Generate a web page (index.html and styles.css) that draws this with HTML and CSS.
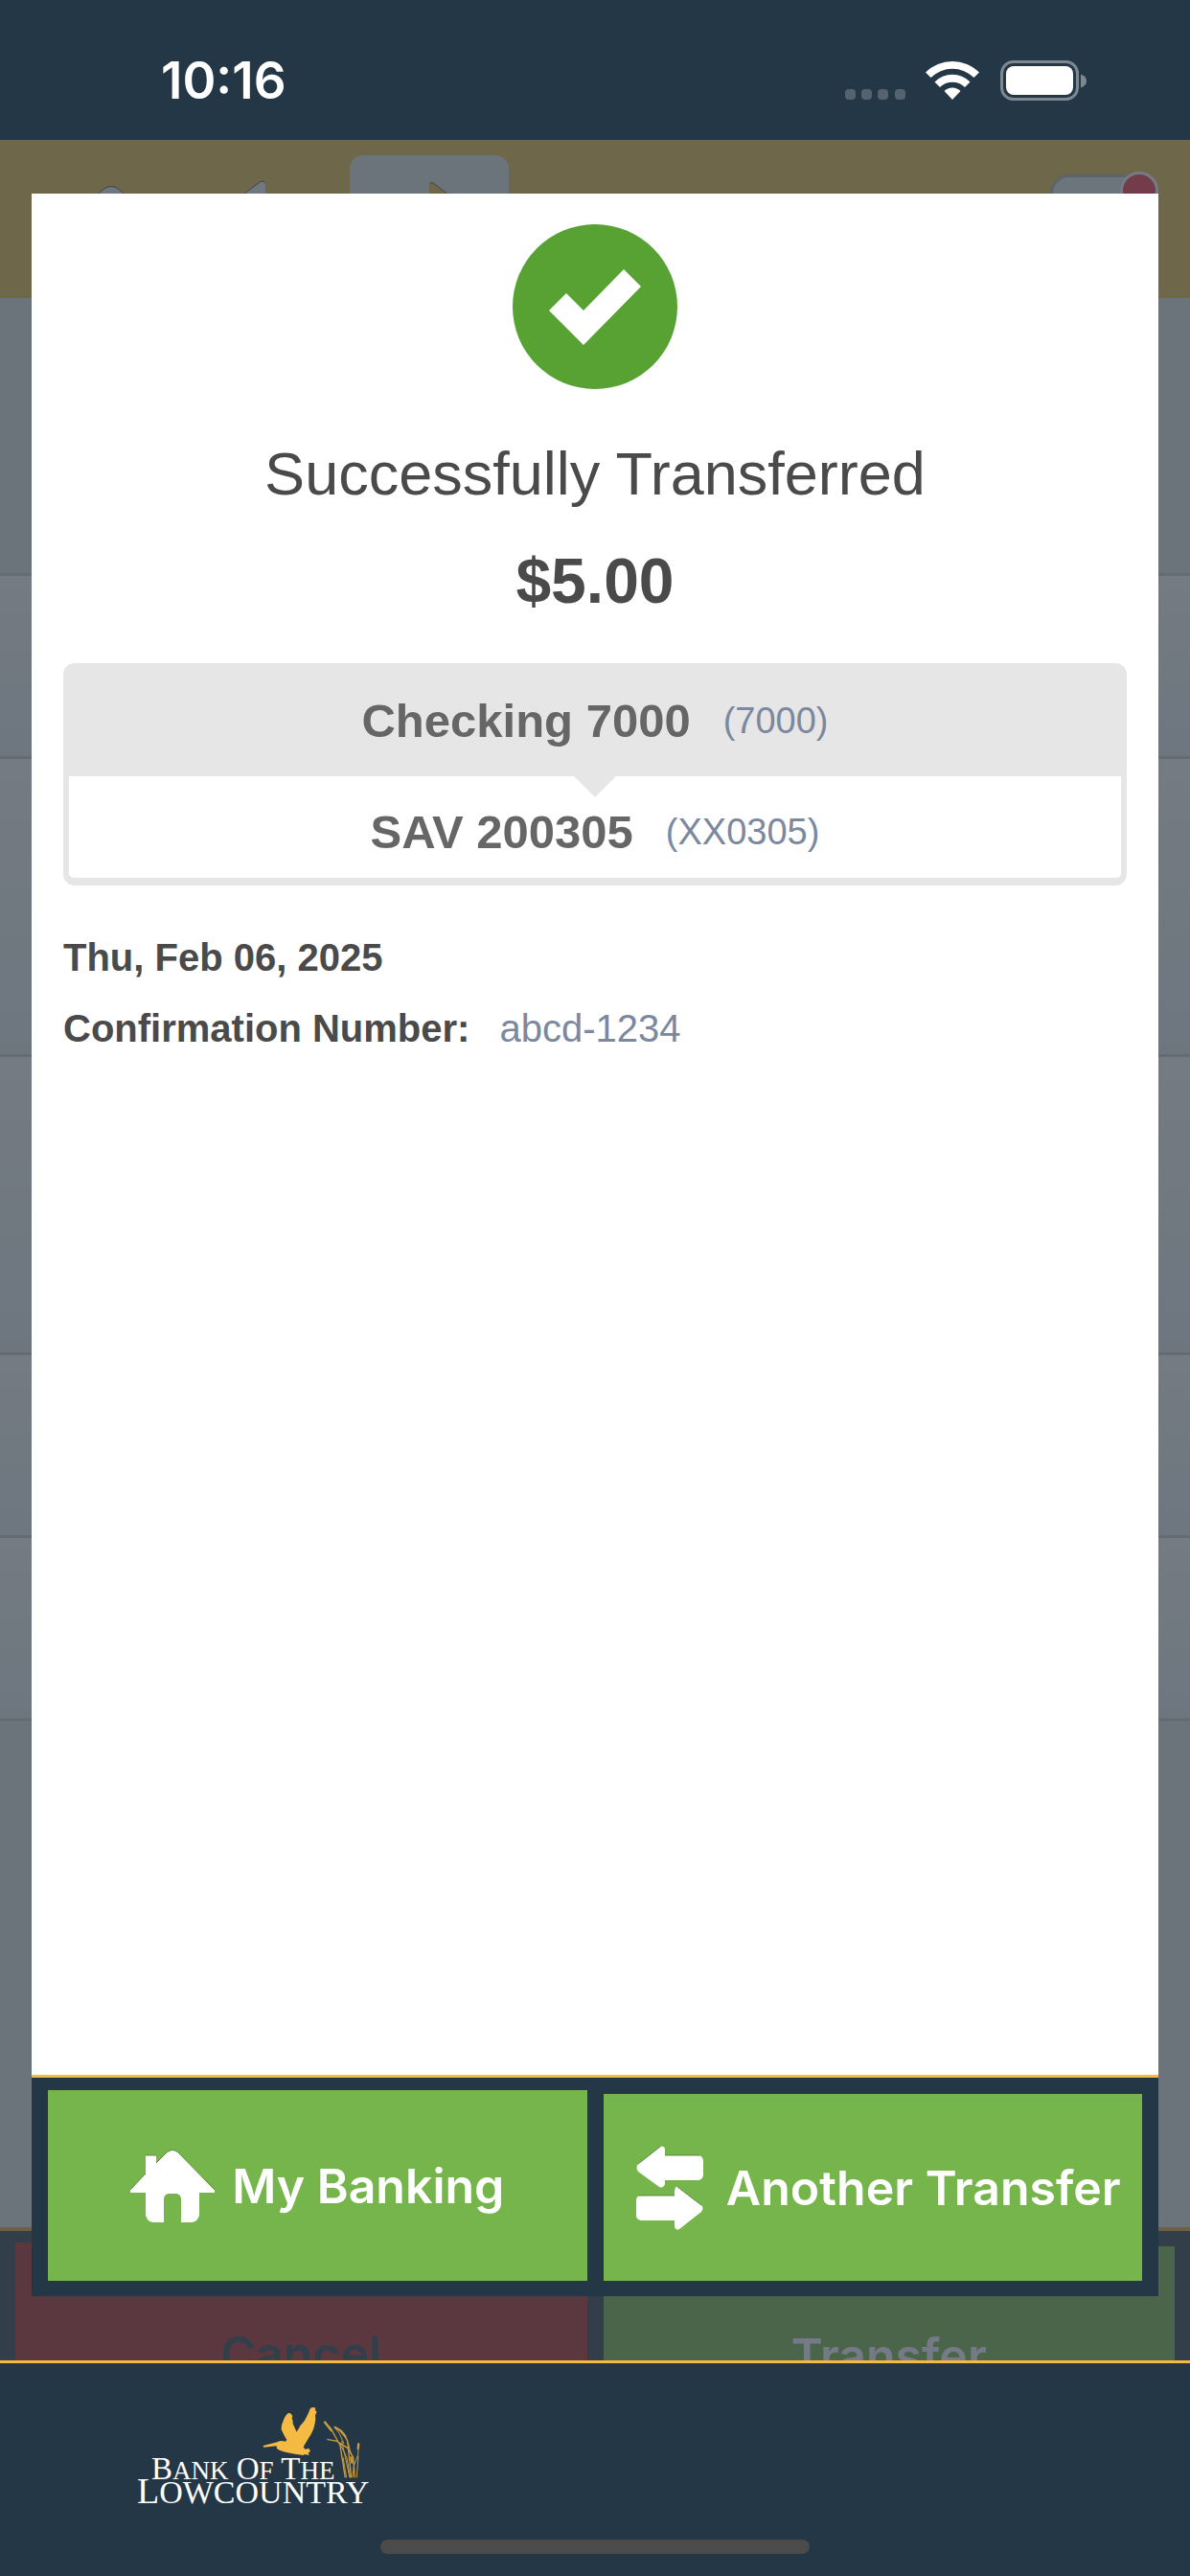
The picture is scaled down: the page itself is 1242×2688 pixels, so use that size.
FILE: index.html
```
<!DOCTYPE html>
<html lang="en">
<head>
    <meta charset="UTF-8">
    <meta name="viewport" content="width=device-width, initial-scale=1.0">
    <title>Transfer Complete</title>
    <link rel="stylesheet" href="styles.css">
</head>
<body>
    <div class="status-bar">
        <time class="clock">10:16</time>
        <svg class="status-icons" viewBox="0 0 252 42" aria-hidden="true">
            <g fill="#56636f">
                <rect x="0" y="30" width="11" height="11" rx="4"/>
                <rect x="17" y="30" width="11" height="11" rx="4"/>
                <rect x="34" y="30" width="11" height="11" rx="4"/>
                <rect x="52" y="30" width="11" height="11" rx="4"/>
            </g>
            <g fill="#fff">
                <path d="M84 12.500a40 40 0 0 1 56 0l-5.500 5.500a32 32 0 0 0-45 0z"/>
                <path d="M93.500 22.500a26 26 0 0 1 37 0l-5.500 5.500a18.500 18.500 0 0 0-26 0z"/>
                <path d="M103.500 32a12 12 0 0 1 17 0L112 41z"/>
            </g>
            <rect x="163.500" y="1.500" width="79" height="39" rx="12" fill="none" stroke="#7d8891" stroke-width="3"/>
            <rect x="168" y="6" width="70" height="30" rx="8" fill="#fff"/>
            <path d="M246 14.500q6 2 6 7t-6 7z" fill="#7d8891"/>
        </svg>
    </div>

    <!-- Transfer page, dimmed behind the dialog -->
    <div class="page" aria-hidden="true">
        <nav class="tabs">
            <a href="#" class="tab" tabindex="-1">
                <svg class="icon-home" viewBox="0 0 88 76"><path d="M30 15Q44-3 58 15L88 44H72V76H53V46H36V76H16V44H0z"/></svg>
            </a>
            <a href="#" class="tab" tabindex="-1">
                <svg class="icon-arrows" viewBox="0 0 70 88"><path d="M25 1Q30 0 30 4V14H75Q80 15 80 20V34H30V44H25L2 26Q-1 22 2 18z"/></svg>
            </a>
            <a href="#" class="tab active" tabindex="-1">
                <svg class="icon-arrows" viewBox="0 0 70 88"><path d="M35 4Q37 0 41 4L68 24Q70 27 68 30L41 50Q35 52 35 46V38H0V20H35z"/></svg>
            </a>
            <div class="toggle"><span class="badge"></span></div>
        </nav>
        <div class="intro"></div>
        <div class="row"></div>
        <div class="row tall"></div>
        <div class="row tall"></div>
        <div class="row"></div>
        <div class="row"></div>
        <div class="page-actions">
            <button type="button" class="page-btn cancel" tabindex="-1">Cancel</button>
            <button type="button" class="page-btn submit" tabindex="-1">Transfer</button>
        </div>
    </div>

    <main class="modal">
        <div class="modal-body">
            <svg class="check" viewBox="0 0 172 172" aria-hidden="true">
                <circle cx="86" cy="86" r="86" fill="#58a233"/>
                <path d="M56 72L74 90L116 47L134 65L74 126L38 90z" fill="#fff"/>
            </svg>
            <h1>Successfully Transferred</h1>
            <p class="amount">$5.00</p>

            <div class="accounts">
                <div class="account from">
                    <span class="account-name">Checking 7000</span>
                    <span class="account-number">(7000)</span>
                </div>
                <div class="account to">
                    <span class="account-name">SAV 200305</span>
                    <span class="account-number">(XX0305)</span>
                </div>
            </div>

            <p class="detail">Thu, Feb 06, 2025</p>
            <p class="detail">Confirmation Number: <span class="detail-value">abcd-1234</span></p>
        </div>

        <div class="modal-actions">
            <button type="button" class="btn">
                <svg class="icon-home" viewBox="0 0 88 76" aria-hidden="true">
                    <path d="M0 42L16 25V6H27V14L38 3Q44-2 50 3L88 42V45H72V68Q71 75 64 76H53V51Q52 46 47 46H41Q36 46 35 51V76H24Q17 75 16 68V45H0z" fill="#fff"/>
                    <path d="M0 42L16 25M16 6H27M27 14L38 3Q44-2 50 3L88 42" fill="none" stroke="#5c8b41" stroke-width="1"/>
                </svg>
                My Banking
            </button>
            <button type="button" class="btn btn-short">
                <svg class="icon-arrows" viewBox="0 0 70 88" aria-hidden="true">
                    <path d="M25 1Q30 0 30 4V10H65Q70 11 70 16V30Q70 35 65 36H30V40Q28 45 24 43L2 27Q-1 23 2 19z"/>
                    <path d="M41 44Q42 41 46 45L68 62Q71 65 68 69L45 87Q41 89 40 84V78H5Q0 77 0 73V56Q1 52 5 52H40V47z"/>
                    <path d="M2 19L25 1M30 10H66M3 52H40M43 43L68 62" fill="none" stroke="#5c8b41" stroke-width="1"/>
                </svg>
                Another Transfer
            </button>
        </div>
    </main>

    <footer class="footer">
        <svg class="logo" viewBox="0 0 250 108" role="img" aria-label="Bank Of The Lowcountry">
            <g transform="translate(-40 -70) scale(.3333)">
                <path fill="#f4ba42" d="M524 336L568 325Q578 319 594 323L598 318Q588 302 581 286Q580 272 587 258Q594 238 604 233Q613 234 616 243L614 250Q618 257 617 267L629 293Q639 272 653 259L663 240L672 219Q680 214 688 218L687 225L692 230L687 241L688 252Q686 279 674 300L661 321L650 340L655 347L667 345L671 350L670 356L665 358L668 366L654 363L650 366L623 362L593 356L575 350L567 345L566 337L526 341z"/>
                <g fill="none" stroke="#c79c41" stroke-width="4">
                    <path d="M715 260L737 284L765 335L781 436M746 276L771 291L788 320L800 436M724 316L755 322L788 343L806 372L811 436"/>
                    <path d="M776 296L791 330L800 366M823 327L821 365L808 400L804 436M795 436L781 370L770 322M817 436L822 368M765 330L786 374L797 436M785 436L774 372M749 281L763 298L777 330" stroke-width="3"/>
                    <path d="M716 261L739 290M748 278L766 289L783 309M823 329L821 347M799 370L803 392" stroke-width="7"/>
                </g>
            </g>
            <g class="logo-text">
                <text x="18" y="77" font-size="33">B<tspan font-size="27">ANK</tspan> O<tspan font-size="27">F</tspan> T<tspan font-size="27">HE</tspan></text>
                <text x="3" y="102" font-size="38">L<tspan font-size="34">OWCOUNTRY</tspan></text>
            </g>
        </svg>
        <span class="home-indicator"></span>
    </footer>
</body>
</html>
```
FILE: styles.css
```
* {
    box-sizing: border-box;
}

body {
    margin: 0;
    min-height: 100vh;
    display: flex;
    flex-direction: column;
    background-color: #6b737b;
    font-family: "Liberation Sans", Arial, sans-serif;
    color: #4a4a4a;
}

h1,
p {
    margin: 0;
}

button {
    border: none;
    border-radius: 0;
    padding: 0;
    font-family: Inter, sans-serif;
    font-size: 50px;
    font-weight: 600;
    cursor: pointer;
}

/* Status bar */
.status-bar {
    height: 146px;
    padding: 22px 108px 0 168px;
    display: flex;
    align-items: center;
    justify-content: space-between;
    background-color: #243746;
}

.clock {
    font-family: Inter, sans-serif;
    font-size: 53px;
    font-weight: 600;
    line-height: 60px;
    color: white;
}

.status-icons {
    width: 252px;
    height: 42px;
}

/* Dimmed page */
.page {
    flex: 1;
    display: flex;
    flex-direction: column;
    padding-bottom: 100px;
}

.tabs {
    height: 165px;
    padding: 16px 33px 0;
    display: flex;
    background-color: #6e674a;
}

.tab {
    width: 166px;
    padding-top: 27px;
    display: flex;
    justify-content: center;
    border-radius: 14px 14px 0 0;
    fill: #6f7780;
}

.tab svg {
    overflow: visible;
    filter: drop-shadow(0 -1px 0 #41464b);
}

.tab.active {
    background-color: #6b737b;
    fill: #6e674a;
}

.toggle {
    position: relative;
    width: 113px;
    height: 60px;
    margin: 20px 0 0 auto;
    border: 3px solid #5d656c;
    border-radius: 20px;
    background-color: #6c747c;
}

.badge {
    position: absolute;
    top: -6px;
    right: -3px;
    width: 40px;
    height: 40px;
    border: 3px solid #747b83;
    border-radius: 50%;
    background-color: #743c4b;
}

.intro {
    height: 290px;
    border-bottom: 3px solid #636b73;
}

.row {
    height: 191px;
    border-bottom: 3px solid #636b73;
    background: linear-gradient(#747b82, #6d767f);
}

.row.tall {
    height: 311px;
}

.page-actions {
    margin-top: auto;
    height: 264px;
    padding: 12px 16px 16px;
    display: grid;
    grid-template-columns: 1fr 1fr;
    gap: 17px;
    border-top: 4px solid #6e6046;
    background-color: #323f4b;
}

.page-btn.cancel {
    background-color: #5b383f;
    color: #323f4b;
}

.page-btn.submit {
    margin-top: 4px;
    background-color: #4b654b;
    color: #747b86;
}

/* Dialog */
.modal {
    position: fixed;
    top: 202px;
    right: 33px;
    bottom: 292px;
    left: 33px;
    display: flex;
    flex-direction: column;
    background-color: white;
}

.modal-body {
    flex: 1;
    padding: 32px 33px;
}

.check {
    display: block;
    width: 172px;
    height: 172px;
    margin: 0 auto 48px;
}

h1 {
    font-size: 63px;
    font-weight: normal;
    line-height: 80px;
    text-align: center;
}

.amount {
    margin-top: 32px;
    font-size: 66px;
    font-weight: bold;
    line-height: 80px;
    text-align: center;
}

.accounts {
    margin: 46px 0 38px;
    border: 6px solid #e6e6e6;
    border-bottom-width: 8px;
    border-radius: 12px;
    background-color: white;
}

.account {
    display: flex;
    align-items: center;
    justify-content: center;
    gap: 34px;
    line-height: 56px;
}

.account.from {
    position: relative;
    padding: 26px 0 30px;
    background-color: #e6e6e6;
}

/* Arrow pointing at the destination account */
.account.from::after {
    content: "";
    position: absolute;
    top: 100%;
    left: 50%;
    margin-left: -22px;
    border: 22px solid transparent;
    border-top-color: #e6e6e6;
    border-bottom: none;
}

.account.to {
    padding: 30px 0 20px;
}

.account-name {
    font-size: 49px;
    font-weight: bold;
    color: #666;
}

.account-number {
    font-size: 38px;
    color: #7b889e;
}

.detail {
    font-size: 40px;
    font-weight: bold;
    line-height: 74px;
}

.detail-value {
    margin-left: 20px;
    font-weight: normal;
    color: #7b889e;
}

.modal-actions {
    padding: 13px 17px 16px;
    display: grid;
    grid-template-columns: 1fr 1fr;
    gap: 17px;
    border-top: 3px solid #f4ba42;
    background-color: #243746;
}

.btn {
    height: 199px;
    display: flex;
    align-items: center;
    justify-content: center;
    gap: 18px;
    background-color: #75b54b;
    color: white;
}

.btn-short {
    height: 195px;
    margin-top: 4px;
    padding-left: 12px;
    gap: 24px;
}

.icon-home {
    width: 88px;
    height: 76px;
}

.icon-arrows {
    width: 70px;
    height: 88px;
}

.btn .icon-arrows {
    fill: white;
}

/* Footer */
.footer {
    position: fixed;
    right: 0;
    bottom: 0;
    left: 0;
    height: 225px;
    padding: 44px 140px 0;
    border-top: 3px solid #f4ba42;
    background-color: #243746;
}

.logo {
    display: block;
    width: 250px;
    height: 108px;
}

.logo-text {
    font-family: "Liberation Serif", "Times New Roman", serif;
    fill: white;
}

.home-indicator {
    position: absolute;
    bottom: 23px;
    left: 32%;
    width: 36%;
    height: 15px;
    border-radius: 8px;
    background-color: #4b4b4b;
}
```
